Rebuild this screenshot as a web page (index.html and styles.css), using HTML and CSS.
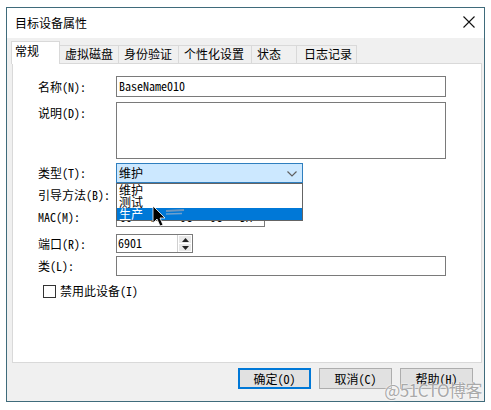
FILE: index.html
```html
<!DOCTYPE html>
<html lang="zh-CN">
<head>
<meta charset="utf-8">
<title>目标设备属性</title>
<link rel="stylesheet" href="styles.css">
</head>
<body>
<div class="window">
  <div class="titlebar">
    <span class="title">目标设备属性</span>
    <svg class="close" width="12" height="12" viewBox="0 0 12 12"><path d="M0.5 0.5L11.5 11.5M11.5 0.5L0.5 11.5" stroke="#111" stroke-width="1.1" fill="none"/></svg>
  </div>
  <div class="body">
    <div class="tabs">
      <div class="tab active w-gen">常规</div>
      <div class="tab w-vd">虚拟磁盘</div>
      <div class="tab w-auth">身份验证</div>
      <div class="tab w-pers">个性化设置</div>
      <div class="tab w-stat">状态</div>
      <div class="tab w-log">日志记录</div>
    </div>
    <div class="panel">
      <div class="row r-name">
        <span class="label">名称(N):</span>
        <div class="field f-wide">BaseName010</div>
      </div>
      <div class="row r-desc">
        <span class="label">说明(D):</span>
        <div class="field f-wide f-area"></div>
      </div>
      <div class="row r-type">
        <span class="label">类型(T):</span>
        <div class="select">
          <span>维护</span>
          <svg class="chev" width="10" height="6" viewBox="0 0 10 6"><path d="M0.5 0.5L5 5L9.5 0.5" stroke="#606060" stroke-width="1.2" fill="none"/></svg>
          <div class="dropdown">
            <div class="opt">维护</div>
            <div class="opt">测试</div>
            <div class="opt sel">生产</div>
          </div>
        </div>
      </div>
      <div class="row r-boot">
        <span class="label">引导方法(B):</span>
        <div class="field f-boot"></div>
      </div>
      <div class="row r-mac">
        <span class="label">MAC(M):</span>
        <div class="field f-mac">00 - 0C - 0C - 0C - DA - 2B</div>
      </div>
      <div class="row r-port">
        <span class="label">端口(R):</span>
        <div class="field f-port">
          <span class="port-val">6901</span>
          <div class="spin">
            <div class="spin-btn"><svg width="7" height="4" viewBox="0 0 7 4"><path d="M0 4L3.5 0L7 4Z" fill="#222"/></svg></div>
            <div class="spin-btn"><svg width="7" height="4" viewBox="0 0 7 4"><path d="M0 0L3.5 4L7 0Z" fill="#222"/></svg></div>
          </div>
        </div>
      </div>
      <div class="row r-cls">
        <span class="label">类(L):</span>
        <div class="field f-wide"></div>
      </div>
      <div class="row r-chk">
        <span class="checkbox"></span>
        <span class="chk-label">禁用此设备(I)</span>
      </div>
      <svg class="cursor" width="34" height="24" viewBox="0 0 34 24">
        <path d="M14 6 L32 5" stroke="#9aa3b5" stroke-width="2" opacity="0.7"/>
        <path d="M14 9 L30 8.5" stroke="#b5bccb" stroke-width="1.5" opacity="0.6"/>
        <path d="M1 1 L1 18 L5 14 L8 21 L11 20 L8 13 L13 13 Z" fill="#000" stroke="#fff" stroke-width="0.8"/>
      </svg>
    </div>
    <div class="buttons">
      <div class="btn default">确定(O)</div>
      <div class="btn">取消(C)</div>
      <div class="btn">帮助(H)</div>
    </div>
  </div>
</div>
<div class="watermark">@51CTO博客</div>
</body>
</html>
```
FILE: styles.css
```css
* { box-sizing: border-box; }
html, body { margin: 0; padding: 0; background: #ffffff; }
body {
  width: 491px;
  height: 410px;
  position: relative;
  overflow: hidden;
  font-family: "Noto Sans CJK SC", sans-serif;
  font-size: 12px;
  color: #000;
}
.window {
  margin: 7px 0 0 6px;
  width: 479px;
  height: 395px;
  border: 1px solid #3f6b7b;
  display: flex;
  flex-direction: column;
  background: #f0f0f0;
}
.titlebar {
  height: 30px;
  background: #fff;
  display: flex;
  align-items: center;
  justify-content: space-between;
  padding: 0 8px 0 8px;
  flex: none;
}
.title { font-size: 12px; line-height: 14px; margin-top: -1px; }
.close { margin-right: 1px; margin-top: -2px; }
.body {
  flex: 1;
  display: flex;
  flex-direction: column;
  padding: 0 2px 0 4px;
}
.tabs {
  display: flex;
  height: 25px;
  padding-top: 3px;
  align-items: flex-end;
  position: relative;
  z-index: 2;
}
.tab {
  height: 18px;
  border: 1px solid #d9d9d9;
  border-bottom: none;
  border-left: none;
  background: #f0f0f0;
  font-size: 12px;
  line-height: 16px;
  padding-left: 5px;
  white-space: nowrap;
  color: #000;
}
.tab.active {
  height: 23px;
  margin-bottom: -1px;
  background: #fff;
  border-left: 1px solid #d9d9d9;
  padding-left: 3px;
  line-height: 18px;
}
.w-gen { width: 49px; }
.w-vd { width: 59px; }
.w-auth { width: 60px; }
.w-pers { width: 73px; }
.w-stat { width: 45px; }
.w-log { width: 60px; padding-left: 7px; }
.panel {
  position: relative;
  height: 300px;
  background: #fff;
  border: 1px solid #d9d9d9;
  margin-left: 1px;
  padding: 12px 0 0 25px;
  font-family: "Noto Sans Mono CJK SC", "Noto Sans CJK SC", monospace;
  z-index: 1;
}
.row { display: flex; align-items: center; }
.label {
  width: 78px;
  flex: none;
  line-height: 14px;
  white-space: nowrap;
}
.field {
  height: 20px;
  border: 1px solid #7a7a7a;
  background: #fff;
  line-height: 18px;
  padding-left: 2px;
  white-space: nowrap;
  overflow: hidden;
}
.f-wide { width: 330px; }
.r-name .field { height: 21px; }
.r-desc { margin-top: 5px; align-items: flex-start; }
.r-desc .label { margin-top: 4px; }
.f-area { height: 57px; }
.r-type { margin-top: 4px; }
.select {
  position: relative;
  width: 187px;
  height: 20px;
  border: 1px solid #2f7fbf;
  background: #cce8ff;
  line-height: 18px;
  padding-left: 2px;
  font-family: "Noto Sans CJK SC", sans-serif;
  z-index: 5;
}
.chev { position: absolute; right: 5px; top: 7px; }
.dropdown {
  position: absolute;
  left: -1px;
  top: 19px;
  width: 187px;
  border: 1px solid #646464;
  background: #fff;
}
.opt { height: 12px; line-height: 12px; padding-left: 2px; font-size: 12px; overflow: visible; }
.opt.sel { background: #0078d7; color: #fff; }
.r-boot { margin-top: 2px; }
.f-boot { width: 187px; }
.r-mac { margin-top: 2px; }
.f-mac { width: 149px; padding-left: 3px; letter-spacing: 0px; }
.r-port { margin-top: 7px; }
.f-port { width: 77px; height: 19px; display: flex; justify-content: space-between; padding-left: 1px; }
.port-val { line-height: 16px; }
.spin { width: 15px; display: flex; flex-direction: column; gap: 1px; padding: 1px; border-left: 1px solid #d0d0d0; }
.spin-btn { flex: 1; background: #e8e8e8; display: flex; align-items: center; justify-content: center; }
.r-cls { margin-top: 3px; }
.r-chk { margin-top: 8px; padding-left: 5px; }
.checkbox { width: 13px; height: 13px; border: 1px solid #333; background: #fff; flex: none; }
.chk-label { margin-left: 4px; line-height: 14px; }
.cursor { position: absolute; left: 139px; top: 141px; z-index: 10; }
.buttons {
  display: flex;
  justify-content: flex-end;
  gap: 8px;
  padding: 5px 9px 0 0;
}
.btn {
  width: 73px;
  height: 21px;
  border: 1px solid #adadad;
  background: #e1e1e1;
  display: flex;
  align-items: center;
  justify-content: center;
  font-family: "Noto Sans Mono CJK SC", "Noto Sans CJK SC", monospace;
  font-size: 12px;
  line-height: 14px;
}
.btn.default { border: 2px solid #0078d7; }
.watermark {
  position: absolute;
  right: 9px;
  top: 380px;
  font-size: 17px;
  line-height: 20px;
  color: #a9a9a9;
  letter-spacing: -0.5px;
  text-shadow: 0 0 1px #fff, 0 0 2px #fff;
}
```
